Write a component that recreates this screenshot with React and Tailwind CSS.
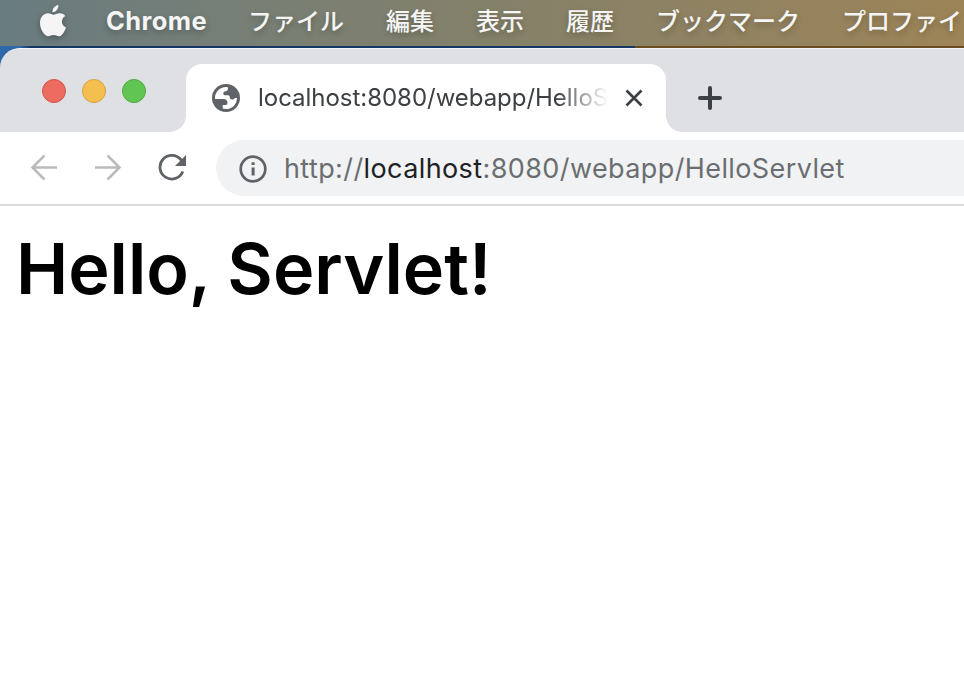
const menus = ["ファイル", "編集", "表示", "履歴", "ブックマーク", "プロファイ"];

function MenuBar() {
  return (
    <div className="flex h-[46px] items-center overflow-hidden bg-gradient-to-r from-[#697c80] via-[#84816a] to-[#9d8457] pb-1 pl-[40px] text-[24px] text-[#f4f5f4] [text-shadow:0_3px_6px_rgba(0,0,0,0.25)]">
      <svg viewBox="0 0 26 32" className="mr-[40px] h-8 w-[26px] shrink-0 drop-shadow-[0_2px_3px_rgba(0,0,0,0.3)]" fill="currentColor">
        <path d="M18.4 0c.2 4-2.7 7.300-5.900 7.200C12.200 3.500 15.200.3 18.400 0Z" />
        <path d="M25.200 10.900c-4.900 2.900-4.100 9.600.8 11.500-1.700 4.800-4.300 8.900-7.100 8.900-2 0-2.800-1.200-5.300-1.200-2.500 0-3.300 1.200-5.200 1.200C4.500 31.300 0 24.600 0 18.100 0 11.700 4 8.300 7.900 8.300c2.300 0 4.300 1.500 5.700 1.500 1.300 0 3.600-1.600 6.300-1.600 2.300 0 4.200 1 5.300 2.700Z" />
      </svg>
      <span className="mr-[41px] w-[101px] shrink-0 whitespace-nowrap font-['Inter',sans-serif] text-[25.500px] font-bold tracking-[0.400px]">Chrome</span>
      <div className="flex shrink-0 gap-[42px] whitespace-nowrap pb-[2px] font-['Noto_Sans_CJK_JP',sans-serif] font-medium leading-none">
        {menus.map((m) => <span key={m}>{m}</span>)}
      </div>
    </div>
  );
}

function Globe() {
  return (
    <svg viewBox="0 0 28 28" className="size-7 shrink-0">
      <circle cx="14" cy="14" r="14" fill="#5f6368" />
      <path d="M3 14.900C2.500 8.300 7.800 3 14 3c.7 0 1.300.1 1.900.2v1.500c0 1.400-.9 2.300-2.300 2.500-1.500.2-2.300.9-2.300 2.200 0 1.200.9 1.800 2 1.800h2.600c1.700 0 1.900 1.300 1.900 2.300 0 1.300.9 2 2.300 2 1.500 0 2-1.100 3-1.600h1.800C25 20.300 20.100 25 14 25c-1.200 0-2.300-.2-3.300-.5v-3.400h2.400c1.500 0 2.400-.8 2.400-2.300 0-2.300-1.600-3.900-3.900-3.900Z" fill="white" />
    </svg>
  );
}

function TabStrip() {
  return (
    <div className="flex h-[84px] rounded-tl-[20px] border-t border-[#f4f4f7] bg-[#dfe0e4] pt-[15px]">
      <div className="flex w-[186px] shrink-0 gap-4 pl-[42px] pt-[15px]">
        <i className="size-6 rounded-full border border-[#d35549] bg-[#ed6b60]" />
        <i className="size-6 rounded-full border border-[#d9a13e] bg-[#f5bf4f]" />
        <i className="size-6 rounded-full border border-[#50a73f] bg-[#61c554]" />
      </div>
      <div className="relative flex h-[68px] w-[480px] shrink-0 items-center rounded-t-[16px] bg-white pl-[26px]">
        <i className="absolute bottom-0 -left-4 size-4 bg-[radial-gradient(circle_at_0_0,transparent_15.5px,white_16px)]" />
        <i className="absolute bottom-0 -right-4 size-4 bg-[radial-gradient(circle_at_100%_0,transparent_15.5px,white_16px)]" />
        <Globe />
        <span className="ml-[18px] w-[350px] overflow-hidden whitespace-nowrap font-['Inter',sans-serif] text-[24px] tracking-[-0.030px] text-[#3c4043] [mask-image:linear-gradient(to_right,black_298px,transparent_350px)]">localhost:8080/webapp/HelloServlet</span>
        <svg viewBox="0 0 18 18" className="ml-[17px] size-[18px] shrink-0" fill="none" stroke="#3c4043" strokeWidth="2.700">
          <path d="m1.500 1.500 15 15m0-15-15 15" />
        </svg>
      </div>
      <svg viewBox="0 0 24 24" className="ml-8 mt-[22px] size-6" fill="none" stroke="#3c4043" strokeWidth="4" strokeLinecap="round">
        <path d="M12 2v20M2 12h20" />
      </svg>
    </div>
  );
}

function Toolbar() {
  return (
    <div className="flex h-[74px] items-center border-b-2 border-[#dadbdc] bg-white pl-[30px]">
      <svg viewBox="0 0 28 28" className="size-7 shrink-0" fill="none" stroke="#b9babb" strokeWidth="2.500">
        <path d="M27 13.500H2.500M14.500 1.500 2.500 13.500l12 12" />
      </svg>
      <svg viewBox="0 0 28 28" className="ml-9 size-7 shrink-0" fill="none" stroke="#b9babb" strokeWidth="2.500">
        <path d="M1 13.500h24.500M13.500 1.500l12 12-12 12" />
      </svg>
      <svg viewBox="0 0 28 28" className="ml-9 size-7 shrink-0">
        <path d="M23.500 6.500A11.800 11.800 0 1 0 24.800 17.500" fill="none" stroke="#5f6368" strokeWidth="2.800" />
        <path d="M28 1v11H17Z" fill="#5f6368" />
      </svg>
      <div className="ml-[30px] flex h-14 flex-1 items-center rounded-l-full bg-[#f1f2f4] pl-[22px] pt-px">
        <svg viewBox="0 0 28 28" className="ml-[0.500px] size-7 shrink-0">
          <circle cx="14" cy="14" r="12.300" fill="none" stroke="#5f6368" strokeWidth="2.700" />
          <path d="M12.600 7.300h3v2.700h-3ZM12.600 12.500h3v8h-3Z" fill="#5f6368" />
        </svg>
        <span className="ml-[17.500px] whitespace-nowrap pt-px font-['Inter',sans-serif] text-[27px] tracking-[0.400px] text-[#6b6e70]">
          http://<b className="font-normal text-[#202124]">localhost</b>:8080/webapp/HelloServlet
        </span>
      </div>
    </div>
  );
}

export default function App() {
  return (
    <div className="flex h-[682px] w-[964px] flex-col overflow-hidden bg-white">
      <MenuBar />
      <div className="bg-[linear-gradient(to_right,#2f68a8_0,#2f68a8_20px,#143766_30px,#143766_635px,#6b4d22_635px,#6b4d22_100%)] pt-[2px]">
        <TabStrip />
      </div>
      <Toolbar />
      <h1 className="pl-4 pt-[18px] font-['Inter',sans-serif] text-[70px] font-semibold leading-[90px] text-black">Hello, Servlet!</h1>
    </div>
  );
}
